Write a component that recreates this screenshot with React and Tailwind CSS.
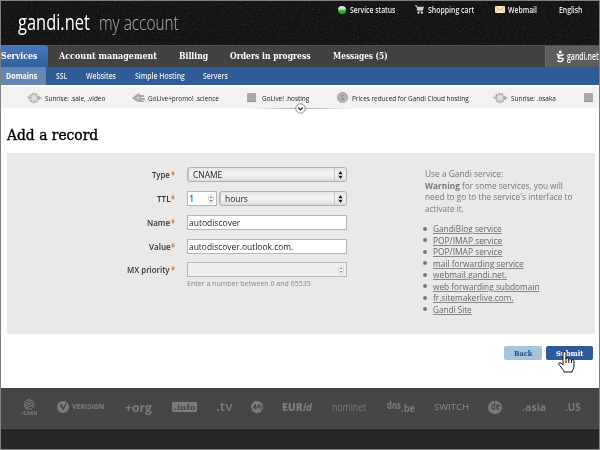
import { useLayoutEffect, useRef, useState } from "react";

// Single-line text condensed or stretched to an exact width.
function Fit({ w, className = "", inner = "", children }) {
  const ref = useRef(null);
  const [scale, setScale] = useState(1);
  useLayoutEffect(() => {
    setScale(w / ref.current.offsetWidth);
  }, [w]);
  return (
    <span className={`block shrink-0 whitespace-nowrap ${className}`} style={{ width: w }}>
      <span ref={ref} className={`inline-block origin-left ${inner}`} style={{ transform: `scaleX(${scale})` }}>
        {children}
      </span>
    </span>
  );
}

const slab = "font-['DejaVu_Serif',serif]";

function Gear({ className }) {
  return (
    <svg className={`shrink-0 ${className}`} width="15" height="12" viewBox="0 0 15 12">
      <circle cx="7" cy="6" r="4.3" fill="#d0d0cd" stroke="#aaa" strokeWidth="1.8" strokeDasharray="2 1" />
      <path d="M0 4.5h4v2H1zM10 4h2l3 2-3 2h-2z" fill="#b0b0ae" />
      <circle cx="7" cy="6" r="2.4" fill="#dededb" />
    </svg>
  );
}

function Rocket({ className }) {
  return (
    <svg className={`shrink-0 ${className}`} width="13" height="10" viewBox="0 0 13 10">
      <path d="M0 5l4-3 3-2 1 2h4v2H9v1h4v2H9l3 1v1H7L4 8z" fill="#a8a8a6" />
      <circle cx="6" cy="5" r="1.5" fill="#d2d2d0" />
    </svg>
  );
}

function Block({ className }) {
  return <span className={`h-[9px] w-[9px] shrink-0 rounded-[1px] border-b border-[#999590] bg-[#aaa9a5] ${className}`} />;
}

function Header() {
  return (
    <header className="relative flex h-[44px] shrink-0 bg-[#131313]">
      <svg className="absolute inset-0" width="598" height="44">
        <filter id="grain">
          <feTurbulence type="fractalNoise" baseFrequency="0.6" numOctaves="2" seed="4" />
          <feColorMatrix values="0 0 0 0 1  0 0 0 0 1  0 0 0 0 1  0.6 0 0 0 -0.28" />
        </filter>
        <rect width="598" height="44" filter="url(#grain)" opacity="0.35" />
      </svg>
      <div className="relative flex w-full font-['Open_Sans',sans-serif]">
        <Fit w={72} className="ml-[17px] mt-[6px] text-[21px] leading-[31px] text-white">gandi.net</Fit>
        <Fit w={80} className="ml-[9px] mt-[6px] text-[20px] font-light leading-[31px] text-[#b4b4b4]">my account</Fit>
        <div className="ml-[159px] mt-[2px] flex h-[13px] items-center text-[8px] font-semibold leading-[13px] text-[#eee]">
          <span className="h-[8px] w-[8px] rounded-full bg-linear-to-b from-[#d6ead5] from-30% to-[#20b32b] to-60%" />
          <Fit w={45} className="ml-[4px]">Service status</Fit>
          <svg className="ml-[20px] shrink-0" width="9" height="9" viewBox="0 0 9 9">
            <path d="M0 .8h1.700l1.200 5.100h5" fill="none" stroke="#ddd" />
            <path d="M2 1.800h7L8 5H2.800z" fill="#ccc" />
            <circle cx="3.5" cy="7.7" r="1" fill="#fff" />
            <circle cx="7" cy="7.7" r="1" fill="#fff" />
          </svg>
          <Fit w={46} className="ml-[4px]">Shopping cart</Fit>
          <svg className="ml-[21px] shrink-0" width="10" height="7" viewBox="0 0 10 7">
            <rect width="10" height="7" rx=".6" fill="#f6e7c9" />
            <path d="M0 .5l5 3.700L10 .5M0 7l3.500-3.500M10 7L6.500 3.500" fill="none" stroke="#c79b5c" strokeWidth=".7" />
          </svg>
          <Fit w={29} className="ml-[3px]">Webmail</Fit>
          <Fit w={23} className="ml-[22px]">English</Fit>
        </div>
      </div>
    </header>
  );
}

function Nav() {
  return (
    <nav className={`flex h-[22px] shrink-0 items-stretch border-t border-[#505050] bg-[#424242] text-[9px] font-bold leading-[21px] text-white ${slab}`}>
      <div className="-mt-px w-[47px] rounded-tr-[3px] bg-linear-to-b from-[#4679bd] to-[#2f5f9c] pt-px">
        <Fit w={36.5}>Services</Fit>
      </div>
      <Fit w={98} className="ml-[11px]">Account management</Fit>
      <Fit w={29} className="ml-[22px]">Billing</Fit>
      <Fit w={81} className="ml-[22px]">Orders in progress</Fit>
      <Fit w={55} className="ml-[22px]">Messages (5)</Fit>
      <div className="ml-auto flex w-[54px] items-center border-l border-[#6a6a6a] bg-[#5d5d5d] pl-[10px] font-['Open_Sans',sans-serif] text-[10px] font-semibold">
        <svg className="shrink-0" width="9" height="13" viewBox="0 0 9 13">
          <circle cx="4.300" cy="2" r="1.500" fill="#fff" />
          <path d="M1 3.800c1 2 5 2.300 6.500 .4M5 5.200C1.500 6 1.500 8.200 4 8.200s3.500 0 3 1.600S3 12.500 1.500 10.500" fill="none" stroke="#fff" strokeWidth="1.500" />
        </svg>
        <Fit w={32} className="ml-[2px]">gandi.net</Fit>
      </div>
    </nav>
  );
}

function SubNav() {
  return (
    <nav className="flex h-[18px] shrink-0 bg-[#2f5c96] text-[8px] font-semibold leading-[18px] text-[#e7edf5] font-['Open_Sans',sans-serif]">
      <div className="w-[45px] bg-[#6786b2] pl-[5px] font-bold text-white">
        <Fit w={31}>Domains</Fit>
      </div>
      <Fit w={11} className="ml-[10px]">SSL</Fit>
      <Fit w={30} className="ml-[19px]">Websites</Fit>
      <Fit w={50} className="ml-[19px]">Simple Hosting</Fit>
      <Fit w={25} className="ml-[18px]">Servers</Fit>
    </nav>
  );
}

function Ticker() {
  return (
    <div className="relative mt-[2px] flex h-[21px] shrink-0 items-center bg-[#f2f2f2] text-[8px] font-medium leading-[19px] text-[#1a1a1a] font-['Open_Sans',sans-serif]">
      <Gear className="ml-[26px]" />
      <Fit w={60} className="ml-[3px]">Sunrise: .sale, .video</Fit>
      <Rocket className="ml-[27px]" />
      <Fit w={71} className="ml-[3px]">GoLive+promo! .science</Fit>
      <Block className="ml-[28px]" />
      <Fit w={47} className="ml-[6px]">GoLive! .hosting</Fit>
      <span className="ml-[28px] flex h-[11px] w-[11px] shrink-0 items-center justify-center rounded-full border border-[#a2a2a2] bg-[#b5b5b3] text-[7px] leading-none text-[#777]">S</span>
      <Fit w={117} className="ml-[4px]">Prices reduced for Gandi Cloud hosting</Fit>
      <Gear className="ml-[24px]" />
      <Fit w={45} className="ml-[3px]">Sunrise: .osaka</Fit>
      <Block className="ml-[28px]" />
      <div className="absolute left-[246px] top-[21px] h-px w-[110px] bg-linear-to-r from-transparent via-[#aaa] to-transparent" />
      <svg className="absolute left-[294px] top-[16px]" width="11" height="11" viewBox="0 0 11 11">
        <circle cx="5.500" cy="5.500" r="4.700" fill="#fff" stroke="#888" />
        <path d="M3.200 4.500l2.300 2.300 2.300-2.300" fill="none" stroke="#333" strokeWidth="1.300" />
      </svg>
    </div>
  );
}

function Stepper({ className }) {
  return (
    <svg className={`shrink-0 ${className}`} width="6" height="10" viewBox="0 0 6 10">
      <rect x=".5" y=".5" width="5" height="9" rx="2.500" fill="#fafafa" stroke="#ccc" strokeWidth=".7" />
      <path d="M1.500 4L3 2l1.500 2zM1.500 6L3 8l1.500-2z" fill="#777" />
    </svg>
  );
}

function Select({ className, children }) {
  return (
    <div className={`flex h-[15px] items-center rounded-[3px] border border-[#b1b3b3] bg-linear-to-b from-[#e6e7e7] via-[#f4f4f4] to-[#dededf] shadow-[inset_1px_0_1px_#c5c8c9] ${className}`}>
      {children}
      <div className="ml-auto flex h-full w-[12px] items-center justify-center border-l border-[#c5c5c5]">
        <svg width="5" height="8" viewBox="0 0 5 8">
          <path d="M.3 3.300L2.500 0l2.200 3.300zM.3 4.700L2.500 8l2.200-3.300z" fill="#222" />
        </svg>
      </div>
    </div>
  );
}

function Row({ label, w, className, children }) {
  return (
    <div className={`flex h-[15px] items-center ${className}`}>
      <div className="flex w-[168px] justify-end text-[9px] font-semibold leading-[15px] text-[#333]">
        <Fit w={w}>{label}</Fit>
        <Fit w={4} className="ml-[1px] text-[9px] font-bold text-[#d2793f]">*</Fit>
      </div>
      <div className="ml-[12px] flex w-[160px] items-center gap-[2px] text-[9px] font-medium leading-[13px] text-[#222]">{children}</div>
    </div>
  );
}

const box = "flex h-[15px] items-center border border-[#b4b7b8]";

const services = [
  ["GandiBlog service", 69],
  ["POP/IMAP service", 69],
  ["POP/IMAP service", 69],
  ["mail forwarding service", 91],
  ["webmail.gandi.net.", 73.5],
  ["web forwarding subdomain", 107],
  ["fr.sitemakerlive.com.", 81],
  ["Gandi Site", 39],
];

function Panel() {
  return (
    <section className="ml-[6px] flex h-[181px] w-[588px] shrink-0 bg-[#e9e9e7] font-['Open_Sans',sans-serif]">
      <div className="w-[340px] pt-[14px]">
        <Row label="Type" w={18}>
          <Select className="w-[160px]"><Fit w={29} className="ml-[5px]">CNAME</Fit></Select>
        </Row>
        <Row label="TTL" w={13.5} className="mt-[9px]">
          <div className={`w-[30px] bg-white ${box}`}>
            <Fit w={5} className="ml-[1px]">1</Fit>
            <Stepper className="ml-auto mr-[2px]" />
          </div>
          <Select className="w-[128px]"><Fit w={22.5} className="ml-[5px]">hours</Fit></Select>
        </Row>
        <Row label="Name" w={23} className="mt-[9px]">
          <div className={`w-[160px] bg-white pl-px ${box}`}><Fit w={51}>autodiscover</Fit></div>
        </Row>
        <Row label="Value" w={21.5} className="mt-[9px]">
          <div className={`w-[160px] bg-white pl-px ${box}`}><Fit w={104}>autodiscover.outlook.com.</Fit></div>
        </Row>
        <Row label="MX priority" w={43} className="mt-[8px]">
          <div className={`w-[160px] bg-[#eeefee] ${box}`}><Stepper className="ml-auto mr-[2px] opacity-70" /></div>
        </Row>
        <Fit w={124} className="ml-[180px] text-[8px] leading-[12px] text-[#858583]">Enter a number between 0 and 65535</Fit>
      </div>
      <div className="pl-[78px] pt-[15px] text-[9px] leading-[11.5px] text-[#777]">
        <Fit w={78}>Use a Gandi service:</Fit>
        <Fit w={138}><b>Warning</b> for some services, you will</Fit>
        <Fit w={147.5}>need to go to the service's interface to</Fit>
        <Fit w={39}>activate it.</Fit>
        <ul className="mt-[9px] text-[#666]">
          {services.map(([name, w], i) => (
            <li key={i} className="-ml-[2px] flex items-center">
              <span className="mr-[6px] h-[4px] w-[4px] rounded-full bg-[#777]" />
              <Fit w={w} inner="underline decoration-[#888] decoration-1 underline-offset-1">{name}</Fit>
            </li>
          ))}
        </ul>
      </div>
    </section>
  );
}

function Footer() {
  const fill = "#7c7c7c";
  return (
    <footer className="mt-auto shrink-0 text-[#7c7c7c] font-['Open_Sans',sans-serif]">
      <div className="flex h-[41px] items-center border-b border-[#505050] bg-[#464646] pb-[2px] leading-[16px]">
        <div className="ml-[20px] flex w-[16px] shrink-0 flex-col items-center">
          <svg width="12" height="11" viewBox="0 0 12 11">
            <circle cx="6" cy="5.500" r="4.800" fill="none" stroke={fill} />
            <path d="M1.500 7.500C3 4 6 7 10 2M3 9.500C5 6 8 9 10.500 4.500M3 3.500c2 1 3-1 4-2.500" fill="none" stroke={fill} strokeWidth="1.100" />
          </svg>
          <Fit w={15} className="mt-px text-[5px] font-bold leading-[4px]">ICANN</Fit>
        </div>
        <svg className="ml-[20px] shrink-0" width="12" height="12" viewBox="0 0 12 12">
          <circle cx="6" cy="6" r="6" fill={fill} />
          <path d="M2.500 3.500l2.500-.3 1.500 3.500L8.500 2l1.500.3L6.500 9.500z" fill="#464646" />
        </svg>
        <Fit w={32} className="ml-[3px] text-[7px] font-bold">VERISIGN</Fit>
        <Fit w={27} className="ml-[21px] text-[13px] font-bold">+org</Fit>
        <div className="ml-[20px] flex h-[10px] w-[25px] shrink-0 justify-center rounded-[1px] bg-[#7c7c7c] text-[8px] font-bold leading-[10px] text-[#464646] font-['DejaVu_Serif',serif]">
          <Fit w={21}>.info</Fit>
        </div>
        <Fit w={16} className="ml-[19px] text-[12px] font-semibold">.tv</Fit>
        <svg className="ml-[19px] shrink-0" width="12" height="12" viewBox="0 0 12 12">
          <circle cx="6" cy="6" r="6" fill={fill} />
          <path d="M1.500 8l3-5v5.500l3-5v4M8 3.500l3 2-2.500 1 2 2.500M2.500 6.500h3" fill="none" stroke="#464646" />
        </svg>
        <div className="ml-[19px] flex shrink-0 text-[10px]">
          <Fit w={21} className="font-extrabold">EUR</Fit>
          <Fit w={9} className="font-bold italic">id</Fit>
        </div>
        <Fit w={34} className="ml-[20px] text-[10px] font-medium">nominet</Fit>
        <div className="ml-[21px] flex shrink-0 text-[10px] font-bold">
          <Fit w={14} className="-mt-[2px]">dns</Fit>
          <Fit w={14} className="mt-px">.be</Fit>
        </div>
        <Fit w={35} className="ml-[19px] text-[8px] font-semibold">SWITCH</Fit>
        <div className="ml-[19px] flex h-[13px] w-[14px] shrink-0 justify-center rounded-full bg-[#7c7c7c] text-[10px] font-bold leading-[10px] text-[#464646]">
          <Fit w={9}>de</Fit>
        </div>
        <Fit w={24} className="ml-[20px] text-[11px] font-bold">.asia</Fit>
        <Fit w={16} className="ml-[19px] text-[11px] font-bold">.US</Fit>
      </div>
      <div className="h-[20px] bg-[#262626]" />
    </footer>
  );
}

export default function App() {
  return (
    <div className="relative flex h-[450px] w-[600px] flex-col overflow-hidden border border-[#808080] bg-white">
      <Header />
      <Nav />
      <SubNav />
      <Ticker />
      <Fit w={91} className={`ml-[6px] mt-[17px] h-[28px] text-[14px] leading-[20px] text-black ${slab}`} inner="[-webkit-text-stroke:0.4px_black]">Add a record</Fit>
      <Panel />
      <div className={`mr-[6px] mt-[12px] flex shrink-0 justify-end gap-[4px] text-[8px] font-bold leading-[14px] ${slab}`}>
        <div className="flex h-[14px] w-[38px] justify-center rounded-[2px] bg-[#a4c5dc] text-[#264d82]"><Fit w={18}>Back</Fit></div>
        <div className="flex h-[14px] w-[47px] justify-center rounded-[2px] bg-[#2d5b99] text-white"><Fit w={27}>Submit</Fit></div>
      </div>
      <svg className="absolute left-[556px] top-[349px]" width="20" height="24" viewBox="0 0 20 24">
        <path d="M6 14V3q0-1.500 1.500-1.500T9 3v6q0-1 1.300-1t1.500 1.300q.2-.8 1.400-.6t1.300 1.500q.2-.7 1.300-.4T17 11.500V16q0 2-1 3.500T15 22H7q0-1.500-1.500-3L2 14.500q-.7-1.500.6-1.800T6 15z" fill="#fff" stroke="#111" />
        <path d="M9 8v5M11.800 9v4M14.500 10v3" stroke="#111" fill="none" />
      </svg>
      <Footer />
    </div>
  );
}
